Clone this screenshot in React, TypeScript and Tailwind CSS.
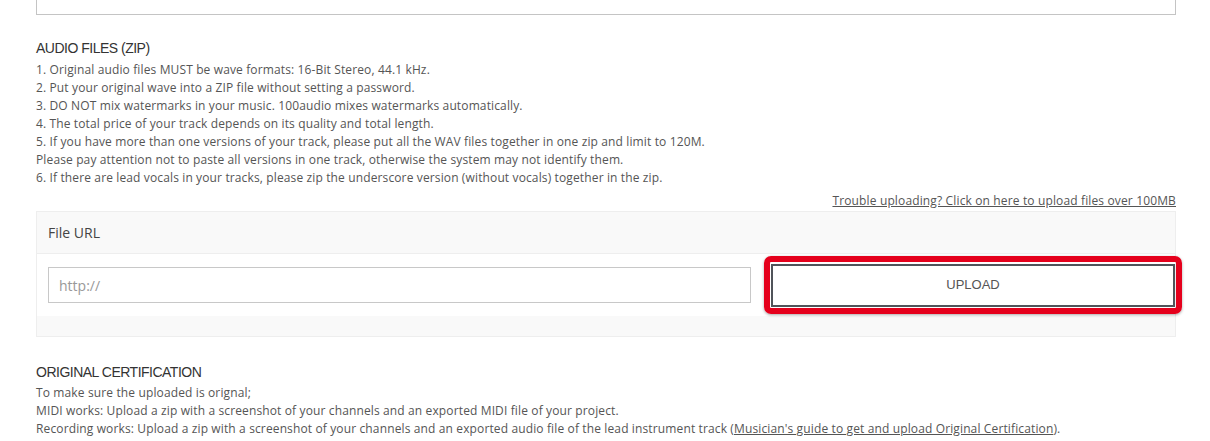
const rules = [
  "1. Original audio files MUST be wave formats: 16-Bit Stereo, 44.1 kHz.",
  "2. Put your original wave into a ZIP file without setting a password.",
  "3. DO NOT mix watermarks in your music. 100audio mixes watermarks automatically.",
  "4. The total price of your track depends on its quality and total length.",
  "5. If you have more than one versions of your track, please put all the WAV files together in one zip and limit to 120M.",
  "Please pay attention not to paste all versions in one track, otherwise the system may not identify them.",
  "6. If there are lead vocals in your tracks, please zip the underscore version (without vocals) together in the zip.",
];

const body = { fontFamily: "'Open Sans', 'Liberation Sans', sans-serif" };
const head = { fontFamily: "'Liberation Sans', Arial, sans-serif" };

export default function App() {
  return (
    <main className="min-h-screen bg-white text-[#555]" style={body}>
      <div className="mx-[36px] w-[1140px]">
        <div className="h-[15px] border-x border-b border-[#c4c4c4]" />

        <section className="pt-[24px]">
          <h2 className="text-[14px] leading-[18px] tracking-[-0.5px] text-[#333]" style={head}>
            AUDIO FILES (ZIP)
          </h2>
          <ul className="mt-[4px] text-[12px] leading-[18px] tracking-[0.13px]">
            {rules.map((r) => (
              <li key={r}>{r}</li>
            ))}
          </ul>
          <div className="mt-[5px] flex justify-end text-[12px] leading-[18px] tracking-[0.14px]">
            <a className="underline">Trouble uploading? Click on here to upload files over 100MB</a>
          </div>

          <div className="mt-[1px] border border-[#eee] bg-[#f9f9f9]">
            <div className="flex h-[42px] items-center border-b border-[#eee] px-[11px] text-[14px] text-[#444]">
              File URL
            </div>
            <div className="flex h-[62px] items-center gap-[20px] bg-white pl-[11px]">
              <input
                className="h-[36px] flex-1 border border-[#c8c8c8] px-[10px] text-[14px] text-[#555] outline-none placeholder:text-[#999]"
                placeholder="http://"
                style={body}
              />
              <div className="relative w-[404px]">
                <div className="pointer-events-none absolute -inset-[7px] -top-[8px] rounded-[7px] border-[6px] border-[#e5001c] shadow-[0_1px_3px_rgba(0,0,0,0.35)]" />
                <button
                  className="relative flex h-[43px] w-full items-center justify-center border-2 border-[#50545a] bg-white text-[13px] text-[#555]"
                  style={head}
                >
                  UPLOAD
                </button>
              </div>
            </div>
            <div className="h-[20px]" />
          </div>
        </section>

        <section className="pt-[26px]">
          <h2 className="text-[14px] leading-[18px] tracking-[-0.5px] text-[#333]" style={head}>
            ORIGINAL CERTIFICATION
          </h2>
          <div className="mt-[3px] text-[12px] leading-[18px] tracking-[0.13px]">
            <p>To make sure the uploaded is orignal;</p>
            <p>MIDI works: Upload a zip with a screenshot of your channels and an exported MIDI file of your project.</p>
            <p>
              Recording works: Upload a zip with a screenshot of your channels and an exported audio file of the lead instrument track (
              <a className="underline">Musician's guide to get and upload Original Certification</a>).
            </p>
          </div>
        </section>
      </div>
    </main>
  );
}
